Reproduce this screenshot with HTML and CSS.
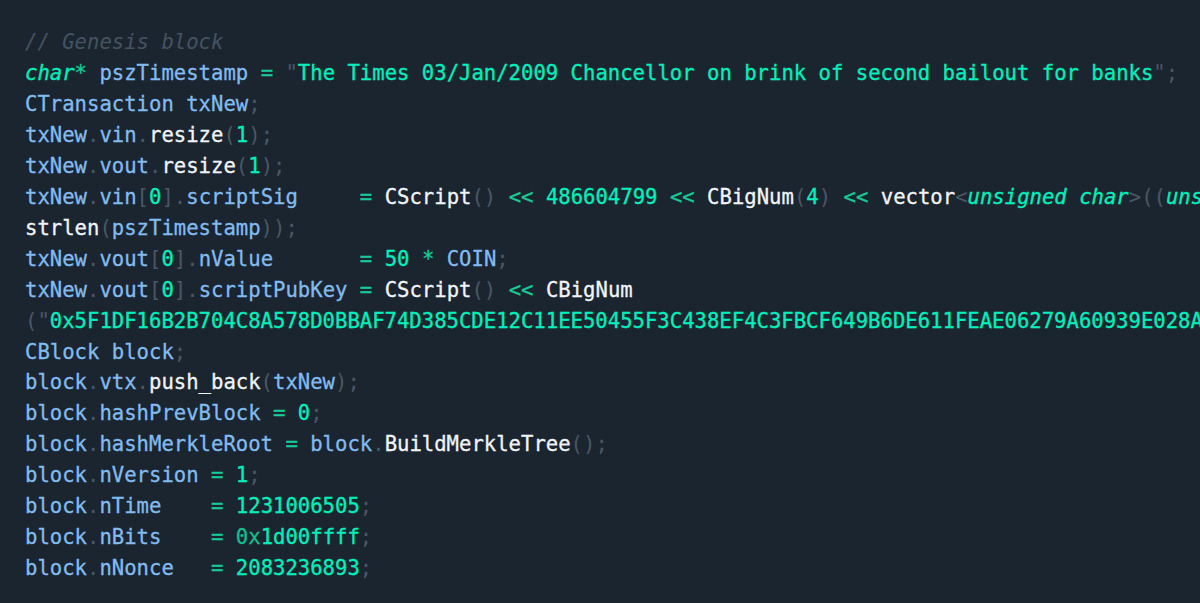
FILE: index.html
```html
<!DOCTYPE html>
<html lang="en">
<head>
<meta charset="utf-8">
<title>Genesis block</title>
<link rel="stylesheet" href="styles.css">
</head>
<body>
<pre class="code"><span class="c">// Genesis block</span>
<span class="k">char</span><span class="o">*</span> <span class="v">pszTimestamp</span> <span class="o">=</span> <span class="p">"</span><span class="s">The Times 03/Jan/2009 Chancellor on brink of second bailout for banks</span><span class="p">";</span>
<span class="v">CTransaction txNew</span><span class="p">;</span>
<span class="v">txNew</span><span class="p">.</span><span class="v">vin</span><span class="p">.</span><span class="f">resize</span><span class="p">(</span><span class="n">1</span><span class="p">);</span>
<span class="v">txNew</span><span class="p">.</span><span class="v">vout</span><span class="p">.</span><span class="f">resize</span><span class="p">(</span><span class="n">1</span><span class="p">);</span>
<span class="v">txNew</span><span class="p">.</span><span class="v">vin</span><span class="p">[</span><span class="n">0</span><span class="p">].</span><span class="v">scriptSig</span>     <span class="o">=</span> <span class="f">CScript</span><span class="p">()</span> <span class="o">&lt;&lt;</span> <span class="n">486604799</span> <span class="o">&lt;&lt;</span> <span class="f">CBigNum</span><span class="p">(</span><span class="n">4</span><span class="p">)</span> <span class="o">&lt;&lt;</span> <span class="f">vector</span><span class="p">&lt;</span><span class="k">unsigned char</span><span class="p">&gt;((</span><span class="k">unsigned char</span><span class="o">*</span><span class="p">)</span><span class="v">pszTimestamp</span><span class="p">,</span> <span class="p">(</span><span class="k">unsigned char</span><span class="o">*</span><span class="p">)</span><span class="v">pszTimestamp</span> <span class="o">+</span>
<span class="f">strlen</span><span class="p">(</span><span class="v">pszTimestamp</span><span class="p">));</span>
<span class="v">txNew</span><span class="p">.</span><span class="v">vout</span><span class="p">[</span><span class="n">0</span><span class="p">].</span><span class="v">nValue</span>       <span class="o">=</span> <span class="n">50</span> <span class="o">*</span> <span class="v">COIN</span><span class="p">;</span>
<span class="v">txNew</span><span class="p">.</span><span class="v">vout</span><span class="p">[</span><span class="n">0</span><span class="p">].</span><span class="v">scriptPubKey</span> <span class="o">=</span> <span class="f">CScript</span><span class="p">()</span> <span class="o">&lt;&lt;</span> <span class="f">CBigNum</span>
<span class="p">("</span><span class="s">0x5F1DF16B2B704C8A578D0BBAF74D385CDE12C11EE50455F3C438EF4C3FBCF649B6DE611FEAE06279A60939E028A8D65C10B73071A6F16719274855FEB0FD8A6704</span><span class="p">"))</span> <span class="o">&lt;&lt;</span> <span class="v">OP_CHECKSIG</span><span class="p">;</span>
<span class="v">CBlock block</span><span class="p">;</span>
<span class="v">block</span><span class="p">.</span><span class="v">vtx</span><span class="p">.</span><span class="f">push_back</span><span class="p">(</span><span class="v">txNew</span><span class="p">);</span>
<span class="v">block</span><span class="p">.</span><span class="v">hashPrevBlock</span> <span class="o">=</span> <span class="n">0</span><span class="p">;</span>
<span class="v">block</span><span class="p">.</span><span class="v">hashMerkleRoot</span> <span class="o">=</span> <span class="v">block</span><span class="p">.</span><span class="f">BuildMerkleTree</span><span class="p">();</span>
<span class="v">block</span><span class="p">.</span><span class="v">nVersion</span> <span class="o">=</span> <span class="n">1</span><span class="p">;</span>
<span class="v">block</span><span class="p">.</span><span class="v">nTime</span>    <span class="o">=</span> <span class="n">1231006505</span><span class="p">;</span>
<span class="v">block</span><span class="p">.</span><span class="v">nBits</span>    <span class="o">=</span> <span class="x">0x</span><span class="n">1d00ffff</span><span class="p">;</span>
<span class="v">block</span><span class="p">.</span><span class="v">nNonce</span>   <span class="o">=</span> <span class="n">2083236893</span><span class="p">;</span></pre>
</body>
</html>
```

FILE: styles.css
```css
html, body {
  margin: 0;
  padding: 0;
  background: #1b2530;
  height: 100%;
  overflow: hidden;
}

.code {
  margin: 0;
  padding: 27px 0 0 25px;
  font-family: "DejaVu Sans Mono", "Liberation Mono", monospace;
  font-size: 20.6px;
  line-height: 30.95px;
  white-space: pre;
  overflow: hidden;
  color: #82bbee;
  -webkit-text-stroke: 0.3px currentColor;
}

.c { color: #455360; font-style: italic; -webkit-text-stroke: 0; }
.k { color: #00f0bd; font-style: italic; }
.s { color: #00f0bd; }
.n { color: #00f0bd; }
.x { color: #14bf90; }
.o { color: #16cc98; }
.v { color: #82bbee; }
.f { color: #f1f4f7; }
.p { color: #4a5764; -webkit-text-stroke: 0; }
```
